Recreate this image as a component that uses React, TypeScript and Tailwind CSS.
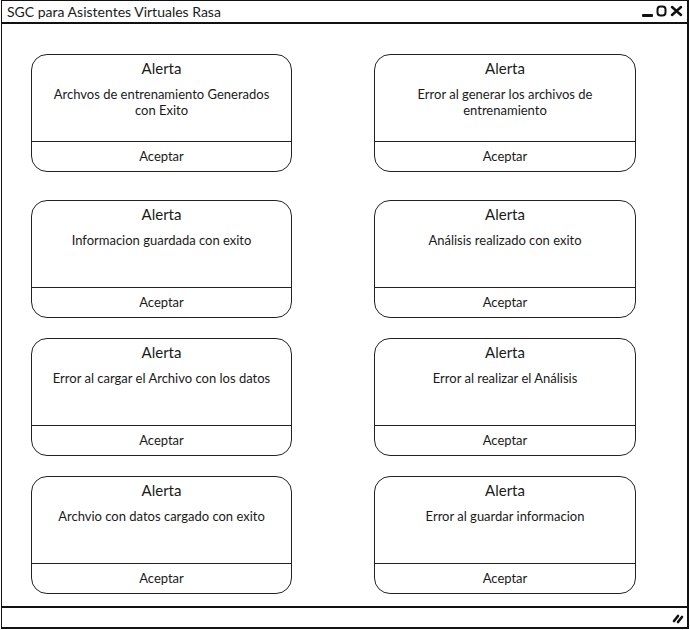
const alerts = [
  { left: "Archvos de entrenamiento Generados con Exito", right: "Error al generar los archivos de entrenamiento", gap: "mt-0" },
  { left: "Informacion guardada con exito", right: "Análisis realizado con exito", gap: "mt-[28px]" },
  { left: "Error al cargar el Archivo con los datos", right: "Error al realizar el Análisis", gap: "mt-[20px]" },
  { left: "Archvio con datos cargado con exito", right: "Error al guardar informacion", gap: "mt-[20px]" },
];

const AlertCard = ({ message }: { message: string }) => {
  return (
    <div className="flex h-[118px] flex-col rounded-[16px] border-[1.5px] border-[#222] bg-white">
      <div className="flex h-[86px] flex-col items-center px-4 text-center">
        <div className="mt-[3px] text-[15px] leading-[20px]">Alerta</div>
        <div className="mt-[8px] w-[230px] text-[13px] leading-[16px]">{message}</div>
      </div>
      <div className="flex flex-1 items-center justify-center border-t-[1.5px] border-[#222] pt-[1px] text-[13px]">
        Aceptar
      </div>
    </div>
  );
};

const App = () => {
  return (
    <div
      className="h-[630px] w-[690px] bg-white text-[#1a1a1a]"
      style={{ fontFamily: "Lato, 'Noto Sans', sans-serif" }}
    >
      <div className="ml-[1px] flex h-[629px] w-[688px] flex-col border-t border-l border-r-2 border-b-2 border-[#111]">
        {/* title bar */}
        <div className="flex h-[23px] shrink-0 items-center justify-between border-b-2 border-[#111] pl-[5px] pr-[4px]">
          <span className="text-[14px] leading-none">SGC para Asistentes Virtuales Rasa</span>
          <svg width="42" height="14" viewBox="0 0 42 14" className="mt-[1px]">
            <rect x="1" y="9" width="11" height="3" rx="1" fill="#111" />
            <rect x="16.5" y="1.5" width="8" height="9" rx="3" fill="none" stroke="#111" strokeWidth="2" />
            <path d="M31 2 L40 10 M40 2 L31 10" stroke="#111" strokeWidth="2.5" strokeLinecap="round" />
          </svg>
        </div>

        {/* content */}
        <div className="flex-1 pl-[29px] pt-[30px]">
          {alerts.map((row, i) => (
            <div key={i} className={`grid grid-cols-[261px_262px] gap-x-[82px] ${row.gap}`}>
              <AlertCard message={row.left} />
              <AlertCard message={row.right} />
            </div>
          ))}
        </div>

        {/* status bar */}
        <div className="flex h-[21px] shrink-0 items-center justify-end border-t-2 border-[#111] pr-[3px]">
          <svg width="12" height="12" viewBox="0 0 12 12">
            <path d="M2 9 L6 4 M6 10 L10 5" stroke="#111" strokeWidth="2.6" strokeLinecap="round" />
          </svg>
        </div>
      </div>
    </div>
  );
};

export default App;
